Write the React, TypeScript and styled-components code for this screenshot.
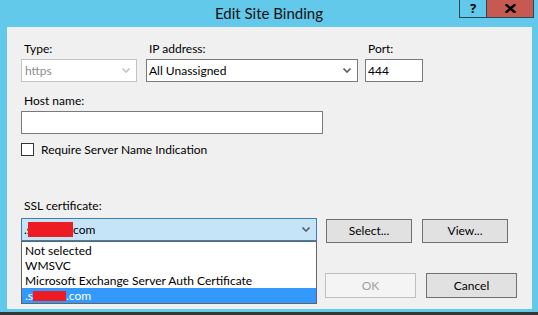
import React from "react";
import styled, { createGlobalStyle } from "styled-components";

const Global = createGlobalStyle`
  html, body { margin: 0; padding: 0; background: #363636; }
  body {
    width: 538px; height: 315px; overflow: hidden;
    font-family: Lato, "Noto Sans", sans-serif;
    font-size: 12px; color: #000;
  }
`;

const Frame = styled.div`
  width: 538px;
  height: 312px;
  background: #63c9ea;
  display: flex;
  flex-direction: column;
`;

const TitleBar = styled.div`
  height: 27px;
  display: grid;
  grid-template-columns: 1fr auto 1fr;
  align-items: start;
`;

const Title = styled.div`
  grid-column: 2;
  font-size: 15px;
  line-height: 26px;
  color: #111;
`;

const Captions = styled.div`
  grid-column: 3;
  justify-self: end;
  display: flex;
  margin-right: 4px;
`;

const CapBtn = styled.div<{ $bg: string; $w: number; $left?: boolean }>`
  width: ${(p) => p.$w}px;
  height: 18px;
  box-sizing: border-box;
  background: ${(p) => p.$bg};
  border: 1px solid #2b4754;
  border-top: none;
  ${(p) => (p.$left ? "" : "border-left: none;")}
  display: flex;
  align-items: center;
  justify-content: center;
  font-family: "Noto Sans", sans-serif;
  font-weight: 700;
  font-size: 13px;
  line-height: 1;
`;

const Client = styled.div`
  flex: 1;
  margin: 0 6px 3px 7px;
  background: #f0f0f0;
  position: relative;
  padding: 14px 0 0 14px;
  display: flex;
  flex-direction: column;
`;

const Row = styled.div<{ $mt?: number }>`
  display: flex;
  align-items: flex-start;
  margin-top: ${(p) => p.$mt ?? 0}px;
`;

const Field = styled.div<{ $w: number; $mr?: number }>`
  width: ${(p) => p.$w}px;
  margin-right: ${(p) => p.$mr ?? 0}px;
  display: flex;
  flex-direction: column;
`;

const Label = styled.div<{ $mb?: number }>`
  height: 16px;
  line-height: 16px;
  padding-left: 3px;
  margin-bottom: ${(p) => p.$mb ?? 2}px;
  white-space: nowrap;
`;

const Combo = styled.div<{ $disabled?: boolean; $focus?: boolean; $w?: number }>`
  height: 23px;
  ${(p) => (p.$w ? `width: ${p.$w}px;` : "")}
  box-sizing: border-box;
  border: 1px solid ${(p) => (p.$disabled ? "#c3c3c3" : p.$focus ? "#3c7fb1" : "#7a7a7a")};
  background: ${(p) => (p.$focus ? "#c6e4f7" : "#fff")};
  color: ${(p) => (p.$disabled ? "#8d8d8d" : "#000")};
  display: flex;
  align-items: center;
  justify-content: space-between;
  padding: 0 6px 0 ${(p) => (p.$disabled ? 3 : 2)}px;
  line-height: 16px;
  white-space: nowrap;
`;

const TextBox = styled.div<{ $w?: number }>`
  height: 23px;
  ${(p) => (p.$w ? `width: ${p.$w}px;` : "")}
  box-sizing: border-box;
  border: 1px solid #7a7a7a;
  background: #fff;
  padding-left: 2px;
  display: flex;
  align-items: center;
  line-height: 16px;
`;

const CheckRow = styled.label`
  display: flex;
  align-items: center;
  gap: 7px;
  height: 13px;
  margin-top: 9px;
  line-height: 16px;
`;

const CheckBox = styled.span`
  width: 13px;
  height: 13px;
  box-sizing: border-box;
  border: 1px solid #333;
  background: #fff;
`;

const Button = styled.div<{ $w: number; $h: number; $disabled?: boolean; $ml?: number; $mt?: number }>`
  width: ${(p) => p.$w}px;
  height: ${(p) => p.$h}px;
  margin-left: ${(p) => p.$ml ?? 0}px;
  margin-top: ${(p) => p.$mt ?? 0}px;
  box-sizing: border-box;
  border: 1px solid ${(p) => (p.$disabled ? "#bfbfbf" : "#707070")};
  background: ${(p) => (p.$disabled ? "#f4f4f4" : "#e1e1e1")};
  color: ${(p) => (p.$disabled ? "#a0a0a0" : "#000")};
  display: flex;
  align-items: center;
  justify-content: center;
  line-height: 16px;
`;

const ButtonRow = styled.div`
  display: flex;
  justify-content: flex-end;
  margin: 30px 15px 0 0;
`;

const Redact = styled.span<{ $w: number; $h: number; $ml?: number }>`
  display: inline-block;
  width: ${(p) => p.$w}px;
  height: ${(p) => p.$h}px;
  margin-left: ${(p) => p.$ml ?? 0}px;
  background: #ed1c24;
  vertical-align: middle;
`;

const ComboText = styled.span`
  display: flex;
  align-items: center;
`;

const DropList = styled.div`
  position: absolute;
  left: 14px;
  top: 214px;
  width: 296px;
  box-sizing: border-box;
  border: 1px solid #646464;
  background: #fff;
  padding-top: 1px;
`;

const Item = styled.div<{ $sel?: boolean }>`
  height: 15px;
  line-height: 15px;
  padding-left: 3px;
  white-space: nowrap;
  display: flex;
  align-items: center;
  background: ${(p) => (p.$sel ? "#3399ff" : "transparent")};
  color: ${(p) => (p.$sel ? "#fff" : "#000")};
`;

const Chevron = ({ color }: { color: string }) => (
  <svg width="8" height="5" viewBox="0 0 8 5">
    <path d="M0.5 0.5 L4 4 L7.5 0.5" fill="none" stroke={color} strokeWidth="1.6" />
  </svg>
);

const CloseGlyph = () => (
  <svg width="11" height="9" viewBox="0 0 11 9">
    <path d="M1.5 1 L9.5 8 M9.5 1 L1.5 8" stroke="#000" strokeWidth="2.4" strokeLinecap="square" />
  </svg>
);

export default function App() {
  return (
    <>
      <Global />
      <Frame>
        <TitleBar>
          <Title>Edit Site Binding</Title>
          <Captions>
            <CapBtn $bg="#63c9ea" $w={28} $left>?</CapBtn>
            <CapBtn $bg="#c75a50" $w={47}>
              <CloseGlyph />
            </CapBtn>
          </Captions>
        </TitleBar>
        <Client>
          <Row>
            <Field $w={116} $mr={9}>
              <Label>Type:</Label>
              <Combo $disabled>
                <span>https</span>
                <Chevron color="#c4c4c4" />
              </Combo>
            </Field>
            <Field $w={212} $mr={7}>
              <Label>IP address:</Label>
              <Combo>
                <span>All Unassigned</span>
                <Chevron color="#5f5f5f" />
              </Combo>
            </Field>
            <Field $w={58}>
              <Label>Port:</Label>
              <TextBox>444</TextBox>
            </Field>
          </Row>
          <Row $mt={11}>
            <Field $w={302}>
              <Label>Host name:</Label>
              <TextBox />
            </Field>
          </Row>
          <CheckRow>
            <CheckBox />
            <span>Require Server Name Indication</span>
          </CheckRow>
          <Row $mt={42}>
            <Field $w={296}>
              <Label $mb={4}>SSL certificate:</Label>
              <Row>
                <Combo $focus $w={296}>
                  <ComboText>
                    .s<Redact $w={45} $h={15} $ml={-4} />com
                  </ComboText>
                  <Chevron color="#5f5f5f" />
                </Combo>
              </Row>
            </Field>
            <Button $w={86} $h={24} $ml={9} $mt={21}>Select...</Button>
            <Button $w={86} $h={24} $ml={10} $mt={21}>View...</Button>
          </Row>
          <ButtonRow>
            <Button $w={91} $h={25} $disabled>OK</Button>
            <Button $w={91} $h={25} $ml={10}>Cancel</Button>
          </ButtonRow>
          <DropList>
            <Item>Not selected</Item>
            <Item>WMSVC</Item>
            <Item>Microsoft Exchange Server Auth Certificate</Item>
            <Item $sel>
              .s<Redact $w={33} $h={10} />.com
            </Item>
          </DropList>
        </Client>
      </Frame>
    </>
  );
}
